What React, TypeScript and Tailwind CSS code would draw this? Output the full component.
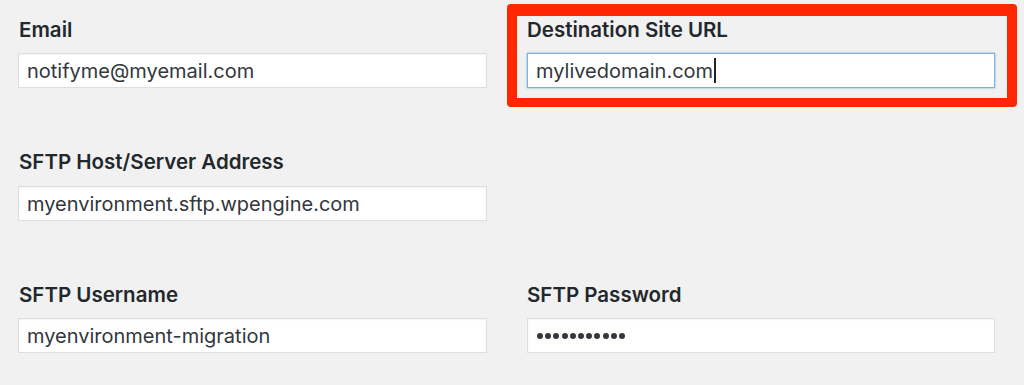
import React from "react";

const font = { fontFamily: "Inter, 'Noto Sans', 'Liberation Sans', sans-serif" };

function Label({ children }: { children: React.ReactNode }) {
  return (
    <div className="text-[20.5px] leading-[24px] font-semibold text-[#23282d]">
      {children}
    </div>
  );
}

function Field({
  value,
  focused,
  caret,
  mono,
}: {
  value: string;
  focused?: boolean;
  caret?: boolean;
  mono?: boolean;
}) {
  return (
    <div
      className={
        "h-[35px] bg-white flex items-center pl-[8px] text-[20px] text-[#32373c] " +
        (focused
          ? "border border-[#7fb0dd] shadow-[0_0_2px_rgba(30,140,190,0.6)]"
          : "border border-[#dedede] shadow-[inset_0_1px_2px_rgba(0,0,0,0.05)]")
      }
    >
      {mono ? (
        <span className="flex gap-[2.2px] pl-[1px]">
          {Array.from({ length: 11 }).map((_, i) => (
            <span key={i} className="block w-[6px] h-[6px] rounded-full bg-[#32373c]" />
          ))}
        </span>
      ) : (
        <span className="leading-none">{value}</span>
      )}
      {caret && <span className="block w-[1.5px] h-[25px] bg-[#222] ml-[1px]" />}
    </div>
  );
}

export default function App() {
  return (
    <div className="w-[1024px] h-[385px] bg-[#f1f1f1] overflow-hidden" style={font}>
      <div className="grid grid-cols-[469px_468px] gap-x-[40px] pl-[18px] pt-[18px]">
        <div>
          <div className="pl-[1px]">
            <Label>Email</Label>
          </div>
          <div className="mt-[11px]">
            <Field value="notifyme@myemail.com" />
          </div>
        </div>
        <div className="relative">
          <div className="absolute left-[-20px] top-[-14px] w-[510px] h-[103px] border-[10px] border-t-[12px] border-b-[9px] border-[#ff2600] rounded-[4px]" />
          <Label>Destination Site URL</Label>
          <div className="mt-[11px]">
            <Field value="mylivedomain.com" focused caret />
          </div>
        </div>

        <div className="mt-[62px]">
          <div className="pl-[1px]">
            <Label>SFTP Host/Server Address</Label>
          </div>
          <div className="mt-[12px]">
            <Field value="myenvironment.sftp.wpengine.com" />
          </div>
        </div>
        <div className="mt-[62px]" />

        <div className="mt-[62px]">
          <div className="pl-[1px]">
            <Label>SFTP Username</Label>
          </div>
          <div className="mt-[11px]">
            <Field value="myenvironment-migration" />
          </div>
        </div>
        <div className="mt-[62px]">
          <Label>SFTP Password</Label>
          <div className="mt-[11px]">
            <Field value="" mono />
          </div>
        </div>
      </div>
    </div>
  );
}
